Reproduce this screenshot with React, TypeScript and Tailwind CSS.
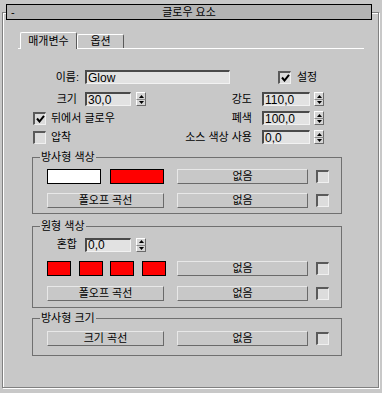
import React from 'react';

const Spinner = () => (
  <div className="flex h-[14px] w-[10px] flex-col bg-[#d6d6d6]">
    <div className="flex h-[7px] items-center justify-center border-t border-l border-r border-t-white border-l-white border-r-[#6a6a6a]">
      <svg width="5" height="3" viewBox="0 0 5 3">
        <path d="M2.5 0L5 3H0z" fill="#000" />
      </svg>
    </div>
    <div className="flex h-[7px] items-center justify-center border-b border-l border-r border-t border-t-[#8a8a8a] border-l-white border-b-[#6a6a6a] border-r-[#6a6a6a]">
      <svg width="5" height="3" viewBox="0 0 5 3">
        <path d="M0 0H5L2.5 3z" fill="#000" />
      </svg>
    </div>
  </div>
);

const Field = ({ value, className }: { value: string; className: string }) => (
  <div
    className={`flex h-[14px] items-center border-t-2 border-l-2 border-b border-r border-t-[#4a4a4a] border-l-[#4a4a4a] border-b-[#f2f2f2] border-r-[#f2f2f2] bg-[#e2e2e2] pl-[1px] text-[12px] leading-none ${className}`}
  >
    {value}
  </div>
);

const Check = ({ checked }: { checked?: boolean }) => (
  <div className="flex h-[13px] w-[13px] shrink-0 items-center justify-center border-t-2 border-l-2 border-b border-r border-t-[#5a5a5a] border-l-[#5a5a5a] border-b-[#f0f0f0] border-r-[#f0f0f0] bg-[#dcdcdc]">
    {checked && (
      <svg width="9" height="8" viewBox="0 0 9 8">
        <path d="M1 3.5L3.5 6.5L8 0.8" stroke="#000" strokeWidth="2" fill="none" />
      </svg>
    )}
  </div>
);

const Btn = ({ children, className }: { children: React.ReactNode; className: string }) => (
  <div
    className={`flex h-[15px] items-center justify-center border border-t-[#e8e8e8] border-l-[#e8e8e8] border-b-[#6a6a6a] border-r-[#6a6a6a] leading-none ${className}`}
  >
    {children}
  </div>
);

const Swatch = ({ className }: { className: string }) => (
  <div className={`h-[15px] border border-black ${className}`} />
);

const Group = ({ title, className, children }: { title: string; className: string; children: React.ReactNode }) => (
  <div className={`relative ml-[29px] w-[310px] border border-[#707070] ${className}`}>
    <span className="absolute -top-[8px] left-[7px] bg-[#c8c8c8] px-[1px] leading-[14px]">{title}</span>
    {children}
  </div>
);

const NoneRow = () => (
  <>
    <Btn className="ml-[13px] w-[131px]">없음</Btn>
    <div className="ml-[8px]">
      <Check />
    </div>
  </>
);

export default function App() {
  return (
    <div className="h-[393px] w-[382px] overflow-hidden bg-[#c8c8c8] pt-[4px] font-['Liberation_Sans','Noto_Sans_CJK_KR',sans-serif] text-[11px] text-black">
      {/* rollout title */}
      <div className="relative z-10 ml-[6px] flex h-[16px] w-[366px] items-center border border-black bg-[#b4b4b4] leading-none">
        <span className="w-[20px] pl-[4px]">-</span>
        <span className="flex-1 text-center">글로우 요소</span>
        <span className="w-[20px]" />
      </div>

      <div className="-mt-[8px] ml-[2px] flex h-[376px] w-[377px] flex-col border border-[#808080] shadow-[inset_1px_1px_0_#fff,1px_1px_0_#fff]">
        {/* tabs */}
        <div className="mt-[19px] ml-[15px] flex h-[17px] w-[346px] items-end border-b border-white">
          <div className="relative -mb-px ml-[2px] flex h-[17px] w-[57px] items-center justify-center rounded-t-[2px] border-t border-l border-r border-t-white border-l-white border-r-[#5a5a5a] bg-[#c8c8c8] leading-none">
            매개변수
          </div>
          <div className="flex h-[14px] w-[47px] items-center justify-center rounded-t-[2px] border-t border-l border-r border-t-white border-l-white border-r-[#5a5a5a] leading-none">
            옵션
          </div>
        </div>

        {/* name */}
        <div className="mt-[21px] flex h-[14px] items-center">
          <span className="w-[76px] text-right">이름:</span>
          <Field value="Glow" className="ml-[6px] w-[145px]" />
          <div className="ml-[48px]">
            <Check checked />
          </div>
          <span className="ml-[6px]">설정</span>
        </div>

        {/* size / intensity */}
        <div className="mt-[8px] flex h-[14px] items-center">
          <div className="flex w-[249px] items-center">
            <span className="w-[74px] text-right">크기</span>
            <Field value="30,0" className="ml-[8px] w-[46px]" />
            <div className="ml-[5px]">
              <Spinner />
            </div>
            <span className="ml-auto">강도</span>
          </div>
          <Field value="110,0" className="ml-[10px] w-[48px]" />
          <div className="ml-[4px]">
            <Spinner />
          </div>
        </div>

        <div className="mt-[5px] flex h-[14px] items-center">
          <div className="flex w-[249px] items-center">
            <div className="ml-[30px]">
              <Check checked />
            </div>
            <span className="ml-[5px]">뒤에서 글로우</span>
            <span className="ml-auto">폐색</span>
          </div>
          <Field value="100,0" className="ml-[10px] w-[48px]" />
          <div className="ml-[4px]">
            <Spinner />
          </div>
        </div>

        <div className="mt-[5px] flex h-[14px] items-center">
          <div className="flex w-[249px] items-center">
            <div className="ml-[30px]">
              <Check />
            </div>
            <span className="ml-[5px]">압착</span>
            <span className="ml-auto">소스 색상 사용</span>
          </div>
          <Field value="0,0" className="ml-[10px] w-[48px]" />
          <div className="ml-[4px]">
            <Spinner />
          </div>
        </div>

        {/* radial color */}
        <Group title="방사형 색상" className="mt-[13px] h-[57px]">
          <div className="mt-[11px] flex items-center pl-[14px]">
            <Swatch className="w-[54px] bg-white" />
            <Swatch className="ml-[9px] w-[54px] bg-[#ff0000]" />
            <NoneRow />
          </div>
          <div className="mt-[9px] flex items-center pl-[14px]">
            <Btn className="w-[117px]">폴오프 곡선</Btn>
            <NoneRow />
          </div>
        </Group>

        {/* circular color */}
        <Group title="원형 색상" className="mt-[12px] h-[82px]">
          <div className="mt-[10px] flex h-[15px] items-center">
            <span className="w-[44px] text-right">혼합</span>
            <Field value="0,0" className="ml-[8px] w-[46px]" />
            <div className="ml-[5px]">
              <Spinner />
            </div>
          </div>
          <div className="mt-[9px] flex items-center pl-[14px]">
            <Swatch className="w-[24px] bg-[#ff0000]" />
            <Swatch className="ml-[8px] w-[24px] bg-[#ff0000]" />
            <Swatch className="ml-[7px] w-[24px] bg-[#ff0000]" />
            <Swatch className="ml-[8px] w-[24px] bg-[#ff0000]" />
            <Btn className="ml-[11px] w-[131px]">없음</Btn>
            <div className="ml-[8px]">
              <Check />
            </div>
          </div>
          <div className="mt-[10px] flex items-center pl-[14px]">
            <Btn className="w-[117px]">폴오프 곡선</Btn>
            <NoneRow />
          </div>
        </Group>

        {/* radial size */}
        <Group title="방사형 크기" className="mt-[10px] h-[38px]">
          <div className="mt-[12px] flex items-center pl-[14px]">
            <Btn className="w-[117px]">크기 곡선</Btn>
            <NoneRow />
          </div>
        </Group>
      </div>
    </div>
  );
}
